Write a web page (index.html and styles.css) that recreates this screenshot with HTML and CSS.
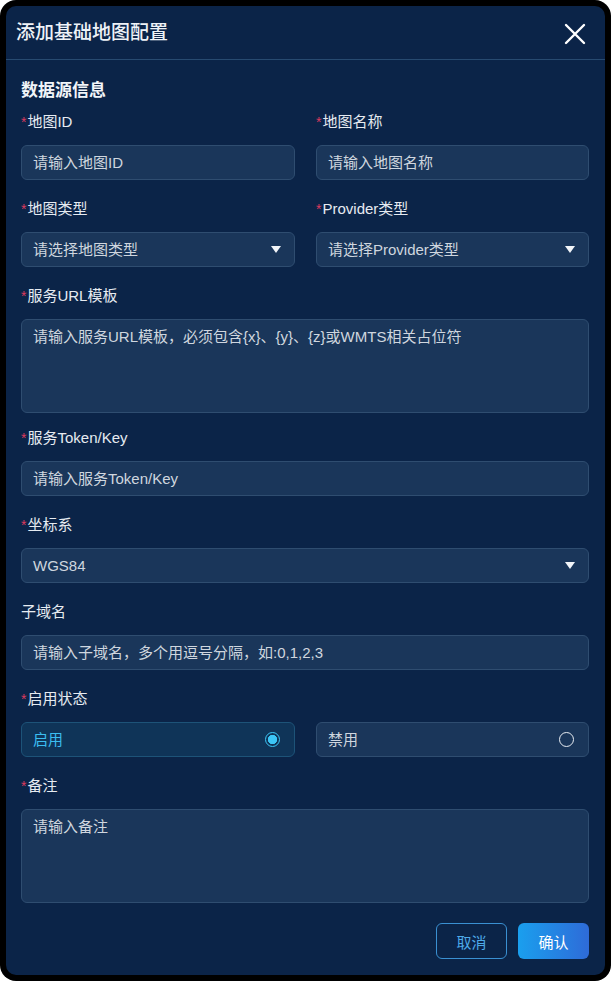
FILE: index.html
```html
<!DOCTYPE html>
<html lang="zh-CN">
<head>
<meta charset="utf-8">
<title>添加基础地图配置</title>
<link rel="stylesheet" href="styles.css">
</head>
<body>
<div class="frame">
  <div class="dialog">
    <div class="header">
      <div class="title">添加基础地图配置</div>
      <svg class="close" viewBox="0 0 22 22" width="22" height="22">
        <path d="M2 2 L20 20 M20 2 L2 20" stroke="#ffffff" stroke-width="2.4" stroke-linecap="round" fill="none"/>
      </svg>
    </div>
    <div class="body">
      <div class="section">数据源信息</div>
      <div class="row">
        <div class="item">
          <div class="label"><span class="req">*</span>地图ID</div>
          <div class="control">请输入地图ID</div>
        </div>
        <div class="item">
          <div class="label"><span class="req">*</span>地图名称</div>
          <div class="control">请输入地图名称</div>
        </div>
      </div>
      <div class="row">
        <div class="item">
          <div class="label"><span class="req">*</span>地图类型</div>
          <div class="control select">请选择地图类型<span class="arrow"></span></div>
        </div>
        <div class="item">
          <div class="label"><span class="req">*</span>Provider类型</div>
          <div class="control select">请选择Provider类型<span class="arrow"></span></div>
        </div>
      </div>
      <div class="item tight">
        <div class="label"><span class="req">*</span>服务URL模板</div>
        <div class="control area">请输入服务URL模板，必须包含{x}、{y}、{z}或WMTS相关占位符</div>
      </div>
      <div class="item">
        <div class="label"><span class="req">*</span>服务Token/Key</div>
        <div class="control">请输入服务Token/Key</div>
      </div>
      <div class="item">
        <div class="label"><span class="req">*</span>坐标系</div>
        <div class="control select">WGS84<span class="arrow"></span></div>
      </div>
      <div class="item">
        <div class="label">子域名</div>
        <div class="control">请输入子域名，多个用逗号分隔，如:0,1,2,3</div>
      </div>
      <div class="item">
        <div class="label"><span class="req">*</span>启用状态</div>
        <div class="row radios">
          <div class="control radio on">启用<span class="dot"></span></div>
          <div class="control radio">禁用<span class="dot"></span></div>
        </div>
      </div>
      <div class="item last">
        <div class="label"><span class="req">*</span>备注</div>
        <div class="control area">请输入备注</div>
      </div>
      <div class="footer">
        <div class="btn cancel">取消</div>
        <div class="btn ok">确认</div>
      </div>
    </div>
  </div>
</div>
</body>
</html>
```

FILE: styles.css
```css
* { box-sizing: border-box; }
html, body { margin: 0; padding: 0; background: #ffffff; }
body {
  font-family: "Liberation Sans", "Noto Sans CJK SC", sans-serif;
  width: 611px;
  height: 981px;
  overflow: hidden;
}
.frame {
  width: 611px;
  height: 981px;
  background: #000000;
  border-radius: 16px;
  padding: 6px;
}
.dialog {
  height: 969px;
  background: #0b2448;
  border-radius: 10px;
  overflow: hidden;
}
.header {
  height: 54px;
  display: flex;
  align-items: center;
  justify-content: space-between;
  padding: 0 19px 0 10px;
  border-bottom: 1px solid #274a70;
}
.title {
  color: #eef2f7;
  font-size: 19px;
  font-weight: 500;
  line-height: 24px;
  margin-top: 1px;
}
.close { display: block; margin-top: 2px; }
.body {
  padding: 21px 16px 0 15px;
}
.section {
  color: #f2f5f9;
  font-size: 17px;
  font-weight: 700;
  line-height: 20px;
  margin-bottom: 11px;
}
.row {
  display: grid;
  grid-template-columns: 274px 273px;
  column-gap: 21px;
}
.item { margin-bottom: 19px; }
.item.tight { margin-bottom: 15px; }
.item.last { margin-bottom: 20px; }
.label {
  color: #e6ebf1;
  font-size: 15px;
  line-height: 20px;
  margin-bottom: 13px;
}
.req {
  color: #dd3a5e;
  font-size: 14px;
  margin-right: 1px;
}
.control {
  height: 35px;
  background: #1a365a;
  border: 1px solid #2f4d70;
  border-radius: 6px;
  color: #cfd6df;
  font-size: 15px;
  line-height: 20px;
  padding: 7px 11px;
  display: flex;
  align-items: center;
  justify-content: space-between;
  white-space: nowrap;
}
.area {
  height: 94px;
  align-items: flex-start;
  padding-top: 7px;
}
.arrow {
  width: 0;
  height: 0;
  border-left: 5px solid transparent;
  border-right: 5px solid transparent;
  border-top: 7px solid #f2f5f9;
  margin-right: 2px;
}
.radio.on {
  background: #0f3458;
  border-color: #1d5378;
  color: #3bbdf0;
}
.dot {
  width: 15px;
  height: 15px;
  border-radius: 50%;
  border: 1.5px solid #e8edf3;
  margin-right: 3px;
}
.radio.on .dot {
  border: 1.8px solid #3cc6f6;
  background: radial-gradient(circle, #3cc6f6 0 4.4px, transparent 4.9px);
}
.footer {
  display: flex;
  justify-content: flex-end;
  gap: 11px;
}
.btn {
  width: 71px;
  height: 36px;
  border-radius: 6px;
  display: flex;
  align-items: center;
  justify-content: center;
  font-size: 15px;
}
.cancel {
  border: 1.5px solid #3a90d2;
  color: #4eaae8;
}
.ok {
  background: linear-gradient(90deg, #1a9fee, #2e6bd8);
  color: #ffffff;
}
```
